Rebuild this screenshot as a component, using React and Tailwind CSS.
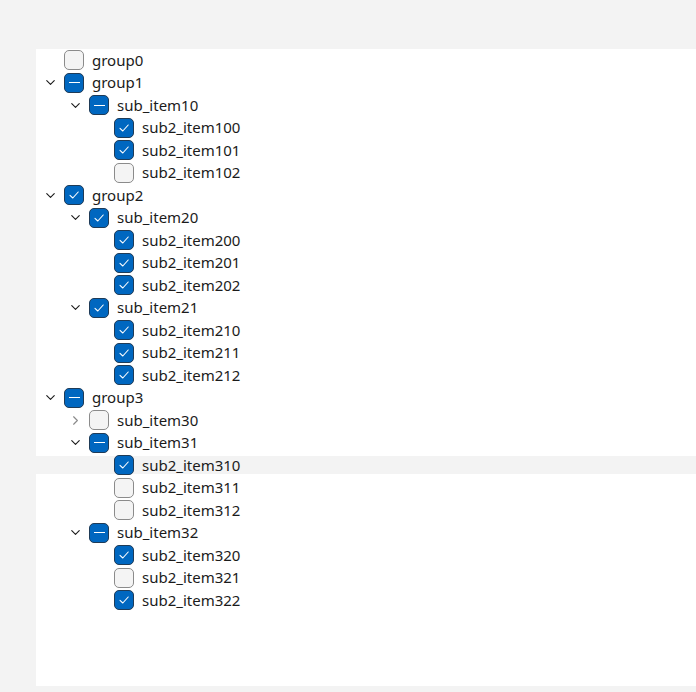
import { ChevronDown, ChevronRight } from 'lucide-react';

const tree = [
  { label: 'group0', state: 'off' },
  {
    label: 'group1', state: 'mixed', open: true, children: [
      {
        label: 'sub_item10', state: 'mixed', open: true, children: [
          { label: 'sub2_item100', state: 'on' },
          { label: 'sub2_item101', state: 'on' },
          { label: 'sub2_item102', state: 'off' },
        ],
      },
    ],
  },
  {
    label: 'group2', state: 'on', open: true, children: [
      {
        label: 'sub_item20', state: 'on', open: true, children: [
          { label: 'sub2_item200', state: 'on' },
          { label: 'sub2_item201', state: 'on' },
          { label: 'sub2_item202', state: 'on' },
        ],
      },
      {
        label: 'sub_item21', state: 'on', open: true, children: [
          { label: 'sub2_item210', state: 'on' },
          { label: 'sub2_item211', state: 'on' },
          { label: 'sub2_item212', state: 'on' },
        ],
      },
    ],
  },
  {
    label: 'group3', state: 'mixed', open: true, children: [
      { label: 'sub_item30', state: 'off', open: false, children: [{ label: 'x', state: 'off' }] },
      {
        label: 'sub_item31', state: 'mixed', open: true, children: [
          { label: 'sub2_item310', state: 'on', hover: true },
          { label: 'sub2_item311', state: 'off' },
          { label: 'sub2_item312', state: 'off' },
        ],
      },
      {
        label: 'sub_item32', state: 'mixed', open: true, children: [
          { label: 'sub2_item320', state: 'on' },
          { label: 'sub2_item321', state: 'off' },
          { label: 'sub2_item322', state: 'on' },
        ],
      },
    ],
  },
];

const Box = ({ state }) => {
  if (state === 'off') {
    return <span className="h-[20px] w-[20px] shrink-0 rounded-[5px] border border-[#8b8b8b] bg-[#f4f4f4]" />;
  }
  return (
    <span className="flex h-[20px] w-[20px] shrink-0 items-center justify-center rounded-[5px] border border-[#1f3b57] bg-[#0067c0]">
      {state === 'on' ? (
        <svg width="12" height="12" viewBox="0 0 12 12" fill="none">
          <path d="M2 6.3 L4.8 9 L10.2 3" stroke="white" strokeWidth="1.1" strokeLinecap="round" strokeLinejoin="round" />
        </svg>
      ) : (
        <span className="h-px w-[11px] bg-white" />
      )}
    </span>
  );
};

const Row = ({ node, depth }) => {
  const hasKids = !!node.children;
  return (
    <>
      <div className="flex h-[22.5px] items-center">
        <div className={`flex h-[18px] w-full items-center ${node.hover ? 'bg-[#f3f3f3]' : ''}`}>
          <span style={{ width: depth * 25 }} className="shrink-0" />
          <span className="flex w-[28px] shrink-0 items-center justify-center pl-[1px] text-[#1b1b1b]">
            {hasKids && (node.open
              ? <ChevronDown className="h-[15px] w-[15px]" strokeWidth={1.8} />
              : <ChevronRight className="h-[15px] w-[15px] text-[#8a8a8a]" strokeWidth={1.8} />)}
          </span>
          <Box state={node.state} />
          <span className="ml-[8px] whitespace-nowrap text-[15px] leading-none text-[#1b1b1b]">{node.label}</span>
        </div>
      </div>
      {hasKids && node.open && node.children.map((c) => <Row key={c.label} node={c} depth={depth + 1} />)}
    </>
  );
};

const App = () => (
  <div className="flex h-[692px] w-[696px] flex-col bg-[#f3f3f3] pl-[36px] pt-[49px] pb-[6px]" style={{ fontFamily: '"Noto Sans", "Liberation Sans", sans-serif' }}>
    <div className="flex-1 bg-white">
      {tree.map((n) => <Row key={n.label} node={n} depth={0} />)}
    </div>
  </div>
);

export default App;
